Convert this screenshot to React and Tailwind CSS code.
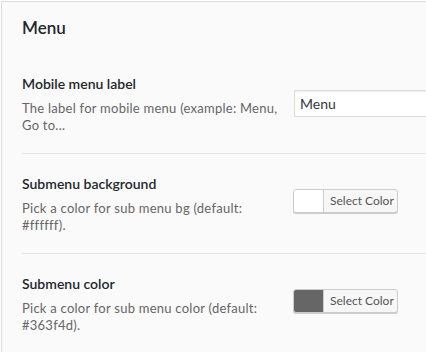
import React from 'react';

const rows = [
  {
    label: 'Mobile menu label',
    desc: 'The label for mobile menu (example: Menu, Go to...',
    type: 'text',
    value: 'Menu',
  },
  {
    label: 'Submenu background',
    desc: 'Pick a color for sub menu bg (default: #ffffff).',
    type: 'color',
    value: '#ffffff',
  },
  {
    label: 'Submenu color',
    desc: 'Pick a color for sub menu color (default: #363f4d).',
    type: 'color',
    value: '#666666',
  },
];

const ColorButton = ({ color }) => (
  <button
    type="button"
    className="mb-[6px] flex h-[24px] w-[105px] overflow-hidden rounded-[3px] border border-[#cccccc] bg-[#f7f7f7] shadow-[0_1px_0_#cccccc] text-left"
  >
    <span className="block h-full w-[30px] border-r border-[#cccccc]" style={{ backgroundColor: color }} />
    <span className="flex-1 pl-[6px] text-[12px] leading-[22px] text-[#555555]">Select Color</span>
  </button>
);

const SettingRow = ({ row }) => (
  <div className="grid grid-cols-[271px_1fr] items-center border-b border-[#e5e5e5] pt-5 pb-[19px] last:border-b-0">
    <div>
      <div className="text-[14px] leading-[20px] font-semibold text-[#23282d]">{row.label}</div>
      <p className="mt-[6px] w-[258px] text-[13px] leading-[17px] tracking-[0.25px] text-[#666666]">{row.desc}</p>
    </div>
    <div>
      {row.type === 'text' ? (
        <input
          type="text"
          defaultValue={row.value}
          className="mb-[1px] ml-px h-[27px] w-[220px] border border-[#dddddd] bg-white px-[5px] text-[14px] text-[#32373c] shadow-[inset_0_1px_2px_rgba(0,0,0,0.07)] outline-none"
        />
      ) : (
        <ColorButton color={row.value} />
      )}
    </div>
  </div>
);

export default function App() {
  return (
    <div className="h-[352px] w-[426px] overflow-hidden bg-white" style={{ fontFamily: 'Lato, "Open Sans", sans-serif' }}>
      <div className="ml-px mt-px h-[351px] border-l border-t border-[#dddddd] bg-[#fafafa] pl-[20px]">
        <h2 className="pt-[14px] pb-[14px] text-[17px] leading-[24px] font-semibold text-[#23282d]">Menu</h2>
        <div>
          {rows.map((row) => (
            <SettingRow key={row.label} row={row} />
          ))}
        </div>
      </div>
    </div>
  );
}
